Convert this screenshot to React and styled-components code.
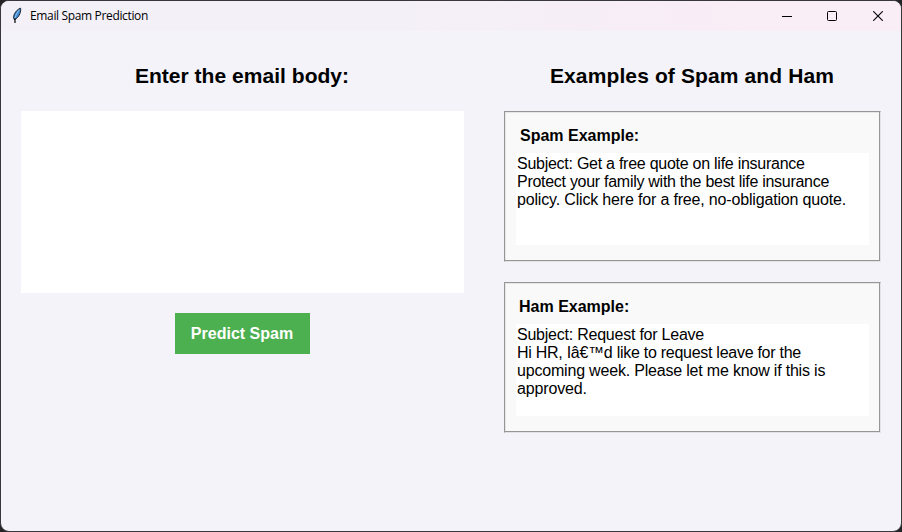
import React from 'react';
import styled, { createGlobalStyle } from 'styled-components';

const GlobalStyle = createGlobalStyle`
  * { box-sizing: border-box; }
  body { margin: 0; background: #242326; overflow: hidden; }
`;

const Window = styled.div`
  width: 902px;
  height: 532px;
  border: 1px solid #38373b;
  border-radius: 9px;
  background: #f4f3f9;
  overflow: hidden;
  color: #000;
  font-family: 'Liberation Sans', Arial, sans-serif;
`;

const TitleBar = styled.header`
  display: flex;
  align-items: center;
  height: 30px;
  padding-left: 9px;
  background: linear-gradient(90deg, #f3f0f8 0%, #f4f0f8 45%, #f6eef7 65%, #f9edf6 82%, #f9edf6 100%);
`;

const WindowTitle = styled.span`
  flex: 1;
  margin-left: 6px;
  font: 12px/16px 'Open Sans', 'Noto Sans', sans-serif;
  letter-spacing: ${(p) => p.$spacing}px;
`;

const WindowButton = styled.button`
  display: flex;
  align-items: center;
  justify-content: center;
  width: 46px;
  height: 30px;
  padding: 0 0 1px ${(p) => p.$nudge || 0}px;
  border: 0;
  background: transparent;
`;

const Content = styled.main`
  display: grid;
  grid-template-columns: 443px 377px;
  column-gap: 40px;
  padding: 30px 20px 20px;
`;

const Column = styled.section`
  display: flex;
  flex-direction: column;
  align-items: center;
`;

const Heading = styled.h1`
  margin: 0 0 20px;
  height: 30px;
  padding-right: 1px;
  font-size: 21px;
  line-height: 30px;
  font-weight: 700;
  white-space: nowrap;
  letter-spacing: ${(p) => p.$spacing}px;
`;

const EmailInput = styled.textarea`
  display: block;
  width: 443px;
  height: 182px;
  padding: 2px;
  border: 0;
  outline: 0;
  resize: none;
  background: #fff;
  font: 16px/18px 'Liberation Sans', Arial, sans-serif;
`;

const PredictButton = styled.button`
  width: 135px;
  height: 41px;
  margin-top: 20px;
  padding: 0 1px 0 0;
  border: 0;
  background: #4caf50;
  color: #fff;
  font: 700 16px/41px 'Liberation Sans', Arial, sans-serif;
  white-space: nowrap;
`;

const ExampleList = styled.div`
  display: flex;
  flex-direction: column;
  gap: 20px;
`;

/* Grooved frame: dark outer edge at top/left, light outer edge at bottom/right. */
const ExampleCard = styled.article`
  width: 377px;
  height: 151px;
  padding: 15px 11px 0;
  border: 1px solid;
  border-color: #969696 #e3e3e5 #e3e3e5 #969696;
  background: #f9f9f9;
  box-shadow: inset -1px -1px 0 #969696, inset 1px 1px 0 #e6e6e6;
`;

const ExampleTitle = styled.h2`
  margin: 0 0 8px;
  padding-left: ${(p) => p.$indent}px;
  font-size: 16px;
  line-height: 18px;
  font-weight: 700;
`;

const ExampleText = styled.div`
  width: 353px;
  height: 92px;
  padding: 2px 1px;
  background: #fff;
  font-size: 16px;
  line-height: 18px;
`;

const Line = styled.div`
  white-space: nowrap;
  letter-spacing: ${(p) => p.$spacing || 0}px;
`;

const FeatherIcon = () => (
  <svg width="14" height="18" viewBox="0 0 14 18" fill="none">
    <path d="M10.6 1.2C7.7 2 4.3 5.5 3.7 9.2c-.2 1.5 0 2.6.7 3.5 1.5-.5 4.4-2.9 5.5-6.1.6-1.9 1-3.7.7-5.4Z" fill="#438bd3" stroke="#17202b" strokeWidth="1" />
    <path d="M9.3 3C7.3 5.4 5.7 8.2 5 11" stroke="#8cc0f0" strokeWidth="1" />
    <path d="M5.1 11.5C4.9 13 5 14 5 16" stroke="#000" strokeWidth="1.2" />
  </svg>
);

const MinimizeIcon = () => (
  <svg width="10" height="10" viewBox="0 0 10 10"><path d="M0 5.5h10" stroke="#000" /></svg>
);
const MaximizeIcon = () => (
  <svg width="10" height="10" viewBox="0 0 10 10"><rect x=".5" y=".5" width="9" height="9" rx="1" fill="none" stroke="#000" /></svg>
);
const CloseIcon = () => (
  <svg width="10" height="10" viewBox="0 0 10 10"><path d="m.2.2 9.6 9.6M9.8.2.2 9.8" stroke="#000" strokeWidth="1.1" /></svg>
);

const EXAMPLES = [
  {
    title: 'Spam Example:',
    indent: 4,
    lines: [
      ['Subject: Get a free quote on life insurance', -0.26],
      ['Protect your family with the best life insurance', -0.28],
      ['policy. Click here for a free, no-obligation quote.', -0.17],
    ],
  },
  {
    title: 'Ham Example:',
    indent: 3,
    lines: [
      ['Subject: Request for Leave', -0.23],
      ['Hi HR, Iâ€™d like to request leave for the', -0.27],
      ['upcoming week. Please let me know if this is', -0.19],
      ['approved.', -0.15],
    ],
  },
];

export default function App() {
  return (
    <>
      <GlobalStyle />
      <Window>
        <TitleBar>
          <FeatherIcon />
          <WindowTitle $spacing={-0.35}>Email Spam Prediction</WindowTitle>
          <WindowButton aria-label="Minimize" $nudge={2}><MinimizeIcon /></WindowButton>
          <WindowButton aria-label="Maximize"><MaximizeIcon /></WindowButton>
          <WindowButton aria-label="Close"><CloseIcon /></WindowButton>
        </TitleBar>
        <Content>
          <Column>
            <Heading $spacing={0.03}>Enter the email body:</Heading>
            <EmailInput aria-label="Email body" />
            <PredictButton>Predict Spam</PredictButton>
          </Column>
          <Column>
            <Heading $spacing={0.12}>Examples of Spam and Ham</Heading>
            <ExampleList>
              {EXAMPLES.map((example) => (
                <ExampleCard key={example.title}>
                  <ExampleTitle $indent={example.indent}>{example.title}</ExampleTitle>
                  <ExampleText>
                    {example.lines.map(([text, spacing]) => (
                      <Line key={text} $spacing={spacing}>{text}</Line>
                    ))}
                  </ExampleText>
                </ExampleCard>
              ))}
            </ExampleList>
          </Column>
        </Content>
      </Window>
    </>
  );
}
